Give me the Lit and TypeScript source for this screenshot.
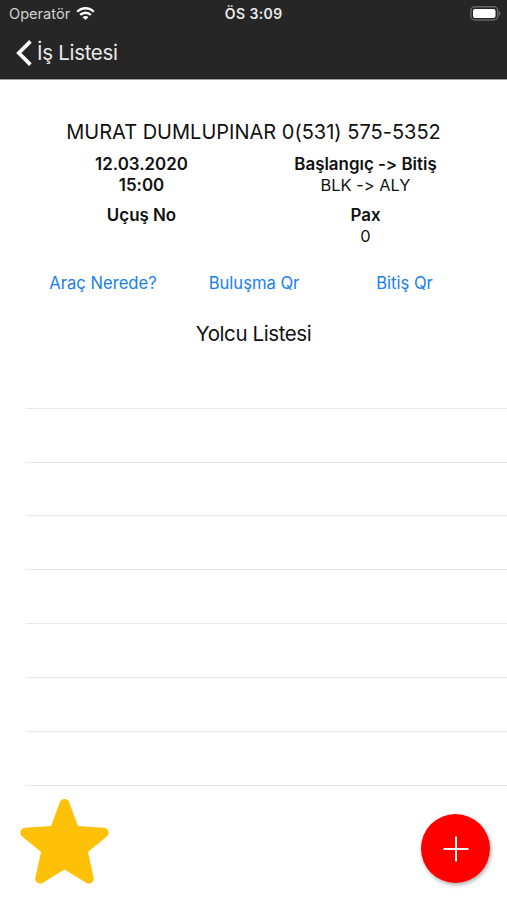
import { LitElement, html, css } from "lit";
import { customElement } from "lit/decorators.js";

@customElement("app-root")
export class AppRoot extends LitElement {
  static styles = css`
    :host {
      display: flex;
      flex-direction: column;
      position: relative;
      height: 900px;
      overflow: hidden;
      background: #fff;
      color: #111;
      font-family: Inter, "Liberation Sans", sans-serif;
      font-feature-settings: "calt" 0;
    }
    header {
      box-sizing: border-box;
      height: 80px;
      background: #262626;
      border-bottom: 1px solid #a0a0a0;
      color: #e9e9e9;
      flex: none;
    }
    .status {
      display: grid;
      grid-template-columns: 1fr auto 1fr;
      align-items: center;
      height: 27px;
      padding: 0 6px 0 9px;
    }
    .carrier {
      display: flex;
      align-items: center;
      gap: 6px;
      font-size: 14.6px;
      color: #d2d2d2;
    }
    .clock {
      font-size: 14px;
      font-weight: 600;
      letter-spacing: 0.4px;
      margin-right: 2.5px;
    }
    .battery {
      justify-self: end;
    }
    .nav {
      display: flex;
      align-items: center;
      height: 51px;
      padding-left: 16px;
      gap: 5px;
      font-size: 20.5px;
      letter-spacing: -0.3px;
    }
    svg {
      display: block;
      flex: none;
    }
    .name {
      margin-top: 39px;
      height: 27px;
      line-height: 27px;
      font-size: 20px;
      text-align: center;
      white-space: nowrap;
    }
    .info {
      display: grid;
      grid-template-columns: 224px 224px;
      justify-content: center;
      row-gap: 9px;
      margin-top: 8px;
      font-size: 16.4px;
      line-height: 21px;
      text-align: center;
    }
    .info b {
      display: block;
      font-weight: 600;
      font-size: 16.9px;
    }
    .info span {
      display: block;
      margin-top: -0.5px;
    }
    .links {
      display: grid;
      grid-template-columns: 151px 151px 150px;
      justify-content: center;
      margin-top: 25.5px;
      height: 22px;
      line-height: 22px;
      font-size: 16.6px;
      color: #1a80ee;
      text-align: center;
    }
    .title {
      margin-top: 26px;
      height: 27px;
      line-height: 27px;
      font-size: 20.5px;
      letter-spacing: -0.4px;
      text-align: center;
    }
    .rows {
      margin: 8px 0 0 26px;
    }
    .row {
      box-sizing: border-box;
      height: 53.82px;
      border-bottom: 1px solid #e8e8e8;
    }
    .star {
      position: absolute;
      left: 20px;
      bottom: 15px;
    }
    .add {
      position: absolute;
      right: 17px;
      bottom: 17px;
      width: 69px;
      height: 69px;
      border-radius: 50%;
      background: #fe0000;
      box-shadow: 1px 2px 4px rgba(0, 0, 0, 0.33);
      display: grid;
      place-items: center;
    }
  `;

  render() {
    return html`
      <header>
        <div class="status">
          <div class="carrier">
            <span>Operatör</span>
            <svg width="19" height="14" viewBox="0 0 19 14" fill="none" stroke="#fff" stroke-width="2.3">
              <path d="M1.2 4.7C5.8 .1 13.2 .1 17.8 4.7" />
              <path d="M4.2 7.9C7.1 5 11.9 5 14.8 7.9" />
              <path d="M9.5 13.1L6.6 10.2C8.2 8.7 10.8 8.7 12.4 10.2Z" fill="#fff" stroke="none" />
            </svg>
          </div>
          <span class="clock">ÖS 3:09</span>
          <svg class="battery" width="31" height="15" viewBox="0 0 31 15">
            <rect x=".8" y=".8" width="27" height="13.2" rx="4" fill="#262626" stroke="#666" stroke-width="1.5" />
            <rect x="3" y="3" width="22.5" height="9" rx="2" fill="#fff" />
            <path d="M29 5C31 6 31 9 29 10Z" fill="#666" />
          </svg>
        </div>
        <div class="nav">
          <svg width="16" height="26" viewBox="0 0 16 26" fill="none" stroke="#fff" stroke-width="3.7">
            <path d="M14.4 1.4L2.8 13L14.4 24.6" />
          </svg>
          <span>İş Listesi</span>
        </div>
      </header>
      <div class="name">MURAT DUMLUPINAR 0(531) 575-5352</div>
      <div class="info">
        <div><b>12.03.2020</b><b>15:00</b></div>
        <div><b>Başlangıç -&gt; Bitiş</b><span>BLK -&gt; ALY</span></div>
        <div><b>Uçuş No</b></div>
        <div><b>Pax</b><span>0</span></div>
      </div>
      <div class="links">
        <span>Araç Nerede?</span><span>Buluşma Qr</span><span>Bitiş Qr</span>
      </div>
      <div class="title">Yolcu Listesi</div>
      <div class="rows">${Array.from({ length: 8 }, () => html`<div class="row"></div>`)}</div>
      <svg class="star" width="89" height="86" viewBox="20 799 89 86">
        <path
          fill="#ffc107"
          d="M51 826L59.8 802.4A5 5 0 0 1 69.2 802.4L78 826L103.5 827.7A5 5 0 0 1 106.8 836.5L88 852L93.5 877A5 5 0 0 1 86 882.8L64.5 869.5L43 882.8A5 5 0 0 1 35.5 877L41 852L22.2 836.5A5 5 0 0 1 25.5 827.7Z"
        />
      </svg>
      <div class="add">
        <svg width="26" height="26" viewBox="0 0 26 26" stroke="#fff" stroke-width="2">
          <path d="M13 .5V25.5M.5 13H25.5" />
        </svg>
      </div>
    `;
  }
}
